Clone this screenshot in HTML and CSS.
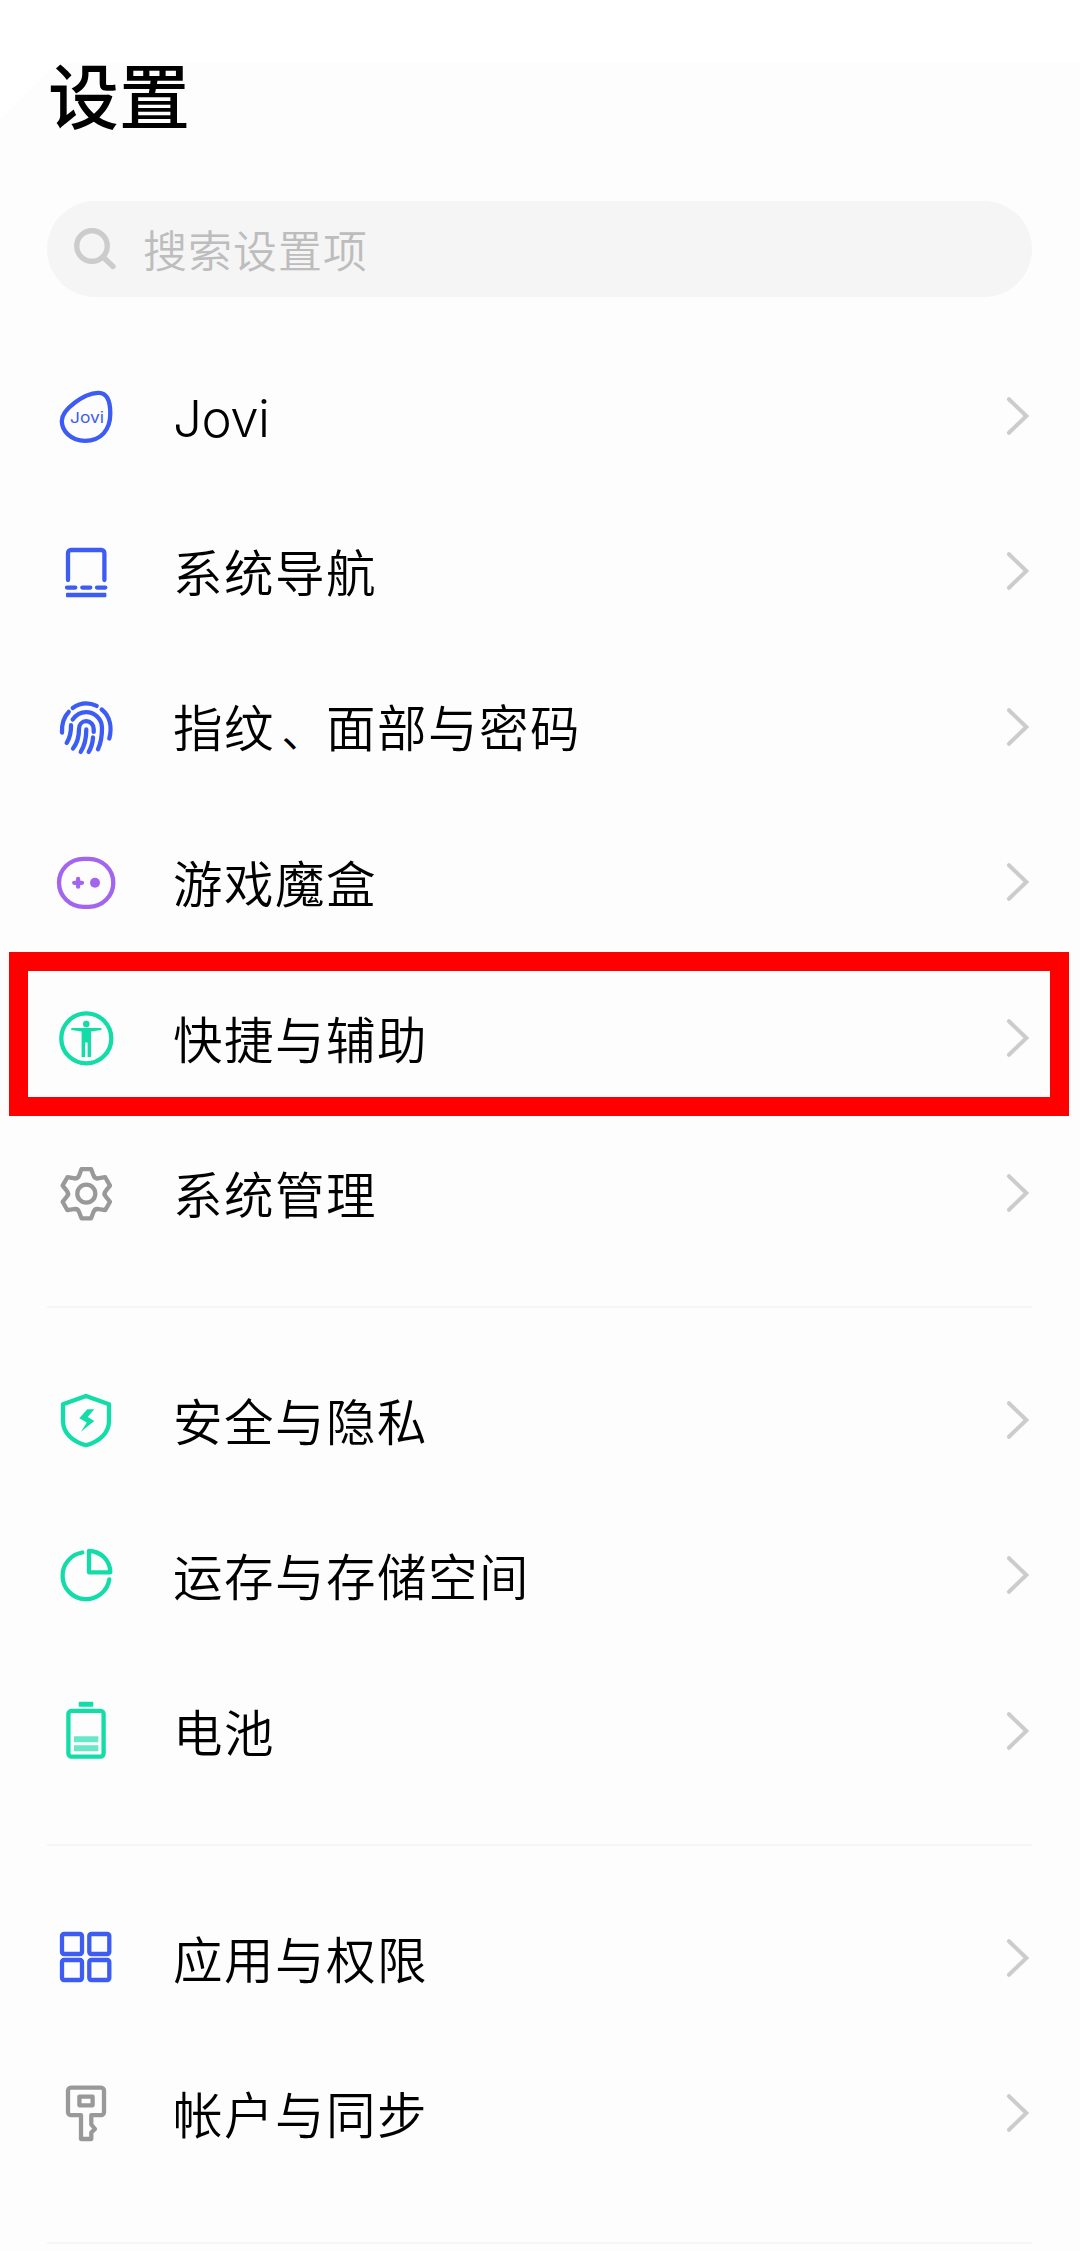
FILE: index.html
```html
<!DOCTYPE html>
<html lang="zh-CN">
<head>
<meta charset="utf-8">
<title>设置</title>
<link rel="stylesheet" href="styles.css">
</head>
<body>
<svg class="defs" aria-hidden="true"><symbol id="chevron" viewBox="0 0 24 42"><path d="M4 4.2 21.3 21 4 37.8"/></symbol></svg>
<main class="screen">
  <h1 class="title">设置</h1>
  <div class="search">
    <svg class="search-icon" viewBox="0 0 46 46"><circle cx="20" cy="20" r="15.3"/><path d="M31 31 41 40.5"/></svg>
    <span class="search-text">搜索设置项</span>
  </div>

  <ul class="group">
    <li class="row">
      <svg class="icon blue" viewBox="0 0 60 60"><path d="M42 6.8C50.500 6.300 54.300 14 54.300 27.500 54.300 44 45 54.800 29 54.800 15 54.800 5.800 45 5.800 35 5.800 23 28 7.500 42 6.800Z"/><text class="jovi" x="14" y="37" textLength="34" lengthAdjust="spacingAndGlyphs">Jovi</text></svg>
      <span class="label latin">Jovi</span>
      <svg class="chevron"><use href="#chevron"/></svg>
    </li>
    <li class="row">
      <svg class="icon blue" viewBox="0 0 60 60"><path d="M12 39V12a3 3 0 0 1 3-3h30.400a3 3 0 0 1 3 3v27M11 46.600h8.300M26.300 46.600h8M41 46.600h8.300"/><rect class="solid" x="10" y="51.700" width="40.400" height="4.600" rx="1"/></svg>
      <span class="label">系统导航</span>
      <svg class="chevron"><use href="#chevron"/></svg>
    </li>
    <li class="row">
      <svg class="icon blue" viewBox="0 0 60 60"><path d="M16.700 10.900C24 5.800 33 5.200 40.700 8.900M12.700 14.900C7.800 20 5.600 27 6 35.500M45.700 12.500C54.500 19.500 56 31 53.300 41.500M16.700 22.500C20.500 17.500 24.800 15.200 30 15.200 39 15.200 46 22 46 31 46 39 45 46 42 52.200M15 28.200C15.200 35 14 40.500 10.700 45.900M37.700 34.900V32C37.700 27.500 34.500 24.200 30.300 24.200 26 24.200 23 27.500 23 32 23 41 21 46.500 17 51.500M30.300 32.500C30.300 42 28.500 49 24.700 54.900M37 40.500C36.700 45.500 35.300 50.500 32.700 54.900"/></svg>
      <span class="label">指纹<span class="comma">、</span>面部与密码</span>
      <svg class="chevron"><use href="#chevron"/></svg>
    </li>
    <li class="row">
      <svg class="icon purple" viewBox="0 0 60 60"><rect x="3" y="6.800" width="54.300" height="48" rx="24.500" ry="24"/><path d="M18.200 30.800h7.800M22.100 26.900v7.800"/><circle class="solid" cx="39" cy="30.800" r="5"/></svg>
      <span class="label">游戏魔盒</span>
      <svg class="chevron"><use href="#chevron"/></svg>
    </li>
    <li class="row highlighted">
      <svg class="icon green" viewBox="0 0 60 60"><circle cx="30.300" cy="30.400" r="25"/><circle class="solid" cx="30.300" cy="16" r="3.300"/><path class="solid" d="M15.300 20H45.300V22L35 23.600V49H31.600V34.500H29V49H25.600V23.600L15.300 22Z"/></svg>
      <span class="label">快捷与辅助</span>
      <svg class="chevron"><use href="#chevron"/></svg>
    </li>
    <li class="row">
      <svg class="icon gray" viewBox="0 0 60 60"><g transform="translate(30.300 30.700)"><circle r="9"/><path d="M-4.800-24.600H4.800L7-18.800Q8.300-14.300 12.800-15.500L18.900-16.500 23.700-8.100 19.800-3.300Q16.500 0 19.800 3.300L23.700 8.100 18.900 16.500 12.800 15.500Q8.300 14.300 7 18.800L4.800 24.600H-4.800L-7 18.800Q-8.300 14.300-12.800 15.500L-18.900 16.500-23.700 8.100-19.800 3.300Q-16.500 0-19.800-3.300L-23.700-8.100-18.900-16.500-12.800-15.500Q-8.300-14.300-7-18.800Z"/></g></svg>
      <span class="label">系统管理</span>
      <svg class="chevron"><use href="#chevron"/></svg>
    </li>
  </ul>

  <ul class="group">
    <li class="row">
      <svg class="icon green" viewBox="0 0 60 60"><path d="M30 6 53 14.300V31C53 43 43.500 51.500 30 55.300 16.500 51.500 7 43 7 31V14.300Z"/><path class="solid" d="M31.300 19.300H38.300L31.700 26.900 38.300 31 25 41.700 30.800 32.400 23.300 28.300Z"/></svg>
      <span class="label">安全与隐私</span>
      <svg class="chevron"><use href="#chevron"/></svg>
    </li>
    <li class="row">
      <svg class="icon green" viewBox="0 0 60 60"><path d="M26.300 7.500A23.500 23.500 0 1 0 53.300 34.300M33 6V27.300H54.300A21.400 21.400 0 0 0 33 6Z"/></svg>
      <span class="label">运存与存储空间</span>
      <svg class="chevron"><use href="#chevron"/></svg>
    </li>
    <li class="row">
      <svg class="icon green" viewBox="0 0 60 60"><rect class="solid" x="22.700" y=".7" width="14.600" height="5" rx="1"/><rect x="12.400" y="9.800" width="35.200" height="45.800" rx="3"/><path class="pale" d="M18 35.300H42.300V41.300H18ZM18 44.300H42.300V50.300H18Z"/></svg>
      <span class="label">电池</span>
      <svg class="chevron"><use href="#chevron"/></svg>
    </li>
  </ul>

  <ul class="group last">
    <li class="row">
      <svg class="icon blue" viewBox="0 0 60 60"><rect x="6" y="6" width="20" height="20" rx="2"/><rect x="33.300" y="6" width="20" height="20" rx="2"/><rect x="6" y="32" width="20" height="20" rx="2"/><rect x="33.300" y="32" width="20" height="20" rx="2"/></svg>
      <span class="label">应用与权限</span>
      <svg class="chevron"><use href="#chevron"/></svg>
    </li>
    <li class="row">
      <svg class="icon gray" viewBox="0 0 60 60"><path d="M25 32.200H15a3 3 0 0 1-3-3V7.600a3 3 0 0 1 3-3H45a3 3 0 0 1 3 3V29.200a3 3 0 0 1-3 3H35.300V41.500L39 46 35.300 49.500V56H25Z"/><rect x="23.400" y="13.700" width="13.200" height="8.600"/></svg>
      <span class="label">帐户与同步</span>
      <svg class="chevron"><use href="#chevron"/></svg>
    </li>
  </ul>
</main>
</body>
</html>
```

FILE: styles.css
```css
* {
  box-sizing: border-box;
}

body {
  margin: 0;
  background: #fff;
  color: #000;
  font-family: "Noto Sans CJK SC", sans-serif;
}

.defs {
  position: absolute;
  width: 0;
  height: 0;
}

.screen {
  height: 2251px;
  padding: 42px 48px 0 47px;
  overflow: hidden;
  background:
    linear-gradient(135deg, #fff 40px, transparent 40px) 0 63px / 120px 120px no-repeat,
    linear-gradient(#fff 63px, #fdfdfe 63px);
}

.title {
  height: 100px;
  margin: 0;
  padding-left: 1px;
  font-size: 71px;
  font-weight: 500;
  line-height: 100px;
}

.search {
  display: flex;
  align-items: center;
  height: 96px;
  margin-top: 59px;
  padding-left: 25px;
  border-radius: 48px;
  background: #f5f5f6;
}

.search-icon {
  width: 46px;
  height: 46px;
  fill: none;
  stroke: #ccc;
  stroke-width: 5.4;
  stroke-linecap: round;
}

.search-text {
  padding-left: 25px;
  color: #bdbdbd;
  font-size: 44px;
  font-weight: 350;
  letter-spacing: 1px;
  line-height: 60px;
}

.group {
  margin: 0;
  padding: 34.400px 0 35.300px;
  border-bottom: 2px solid #f5f5f6;
  list-style: none;
}

.search + .group {
  padding-top: 41.300px;
}

.group.last {
  padding-bottom: 51px;
}

.row {
  position: relative;
  display: flex;
  align-items: center;
  height: 155.400px;
  padding: 0 0 0 9px;
}

.row.highlighted::after {
  content: "";
  position: absolute;
  inset: -7.400px -37px -1px -38px;
  border: 19px solid #f00;
}

.icon {
  flex: none;
  width: 60px;
  height: 60px;
  fill: none;
  stroke: currentColor;
  stroke-width: 4.300;
  stroke-linecap: round;
  stroke-linejoin: round;
}

.icon .solid {
  fill: currentColor;
  stroke: none;
}

.icon .pale {
  fill: #68e8c8;
  stroke: none;
}

.blue { color: #3c5cf4; }
.purple { color: #a465ee; }
.green { color: #12dca8; }
.gray { color: #999; }

.jovi {
  fill: currentColor;
  stroke: none;
  font: 400 15px Inter, sans-serif;
}

.label {
  flex: 1;
  padding: 0 0 0 57px;
  font-size: 49.500px;
  font-weight: 350;
  letter-spacing: 1.500px;
  line-height: 72px;
}

.label.latin {
  padding-top: 7px;
  font-family: Inter, "Noto Sans CJK SC", sans-serif;
  font-size: 51px;
  letter-spacing: -0.500px;
}

.comma {
  padding-left: 6.500px;
  font-size: 43px;
}

.chevron {
  flex: none;
  width: 24px;
  height: 42px;
  margin-right: 3px;
  fill: none;
  stroke: #ccc;
  stroke-width: 4;
  stroke-linecap: round;
}
```
